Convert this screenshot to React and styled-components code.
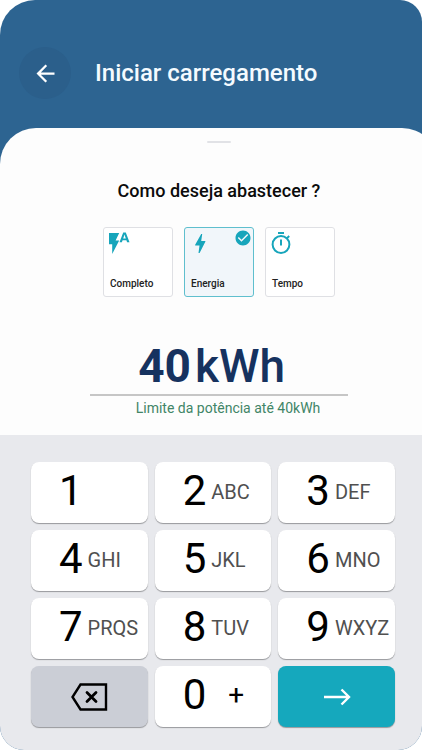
import React, { useState } from "react";
import styled, { createGlobalStyle } from "styled-components";
import { MdArrowBack, MdCheckCircle } from "react-icons/md";

const GlobalStyle = createGlobalStyle`
  * {
    box-sizing: border-box;
  }
  body {
    margin: 0;
    background: #fff;
    font-family: Roboto, "Liberation Sans", sans-serif;
  }
  button, input {
    font-family: inherit;
  }
`;

const Screen = styled.div`
  min-height: 100vh;
  display: flex;
  flex-direction: column;
  overflow: hidden;
  background: #2d6491;
  border-radius: 35px 22px 24px 24px;
`;

const Header = styled.header`
  display: flex;
  align-items: center;
  gap: 24px;
  padding: 47px 19px 29px;
`;

const BackButton = styled.button`
  width: 52px;
  height: 52px;
  display: flex;
  align-items: center;
  justify-content: center;
  padding: 0;
  border: 0;
  border-radius: 50%;
  background: #2b5f8b;
  color: #fff;
  font-size: 27px;
  cursor: pointer;
`;

const Title = styled.h1`
  margin: 0;
  color: #f5fbff;
  font-size: 24px;
  line-height: 28px;
  font-weight: 500;
`;

/* the sheet runs a little past the right edge of the screen */
const Sheet = styled.main`
  flex: 1;
  display: flex;
  flex-direction: column;
  align-items: center;
  margin-right: -16px;
  padding: 13px 0 18px;
  border-radius: 36px 36px 0 0;
  background: #fdfdfd;
`;

const Handle = styled.div`
  width: 24px;
  height: 2px;
  border-radius: 1px;
  background: #e1e2e6;
`;

const Question = styled.h2`
  margin: 36px 0 24px;
  color: #0b0b0b;
  font-size: 18px;
  line-height: 24px;
  font-weight: 500;
`;

const Options = styled.div`
  display: flex;
  gap: 11px;
`;

const Option = styled.label`
  position: relative;
  width: 70px;
  height: 70px;
  display: flex;
  flex-direction: column;
  justify-content: space-between;
  padding: 3px 3px 5px;
  border: 1px solid ${({ $checked }) => ($checked ? "#5fbfce" : "#dfe0e4")};
  border-radius: 3px;
  background: ${({ $checked }) => ($checked ? "#f1f6fa" : "#fff")};
  color: #17a5bb;
  cursor: pointer;

  input {
    position: absolute;
    opacity: 0;
    margin: 0;
  }
  span {
    padding-left: 3px;
    color: #222;
    font-size: 10px;
    line-height: 14px;
    font-weight: 500;
  }
  .check {
    position: absolute;
    top: 1px;
    right: 1px;
    font-size: 18px;
  }
`;

const Amount = styled.label`
  width: 258px;
  display: flex;
  justify-content: center;
  gap: 4px;
  margin-top: 41px;
  padding: 0 16px 0 0;
  border-bottom: 2px solid #c6c6c6;
  color: #16325f;
  font-size: 46px;
  line-height: 56px;
  font-weight: 500;

  input {
    width: 54px;
    padding: 0;
    border: 0;
    outline: 0;
    background: transparent;
    color: inherit;
    font-size: 46px;
    line-height: 56px;
    font-weight: 700;
    text-align: right;
  }
`;

const Hint = styled.p`
  margin: 3px 0 0;
  padding-left: 18px;
  color: #418567;
  font-size: 14px;
  line-height: 18px;
`;

const Keypad = styled.div`
  display: grid;
  grid-template-columns: repeat(3, 1fr);
  grid-auto-rows: 61px;
  gap: 7px;
  padding: 27px 27px 23px 31px;
  background: #e8e9ed;
`;

const Key = styled.button`
  display: flex;
  align-items: center;
  gap: 5px;
  padding: 0 0 4px 28px;
  border: 0;
  border-radius: 8px;
  background: #fff;
  box-shadow: 0 1px 1px #97989c;
  color: #000;
  font-size: 42px;
  line-height: 48px;
  cursor: pointer;

  small {
    padding-top: 2px;
    color: #505050;
    font-size: 20px;
    line-height: 24px;
  }
`;

const PlusKey = styled(Key)`
  gap: 22px;

  small {
    padding-top: 0;
    color: #000;
    font-size: 28px;
  }
`;

const ActionKey = styled(Key)`
  justify-content: center;
  padding: 0;
  background: ${({ $primary }) => ($primary ? "#15a8bd" : "#cbced6")};
  color: ${({ $primary }) => ($primary ? "#fff" : "#000")};
`;

const FlashAutoIcon = () => (
  <svg width="26" height="24" viewBox="0 0 26 24" fill="currentColor">
    <path d="M2 2H12.2L8.6 9.4H12.2L5.2 23V13.2H2Z" />
    <path
      fillRule="evenodd"
      d="M16.2 1.5H18.8L22.5 11.2H20.1L19.4 9.2H15.6L14.9 11.2H12.5ZM16.2 7.4H18.8L17.5 3.6Z"
    />
  </svg>
);

const BoltIcon = () => (
  <svg width="24" height="24" viewBox="0 0 24 24" fill="currentColor">
    <path d="M13.2 3H14.2L13.2 10H16.8C17.5 10 17.5 10.6 17.2 11.1L11.6 22H10.5L11.5 14.6H7.7C7 14.6 7 14 7.3 13.5Z" />
  </svg>
);

const TimerIcon = () => (
  <svg width="24" height="24" viewBox="0 0 24 24" fill="none" stroke="currentColor" strokeWidth="2">
    <circle cx="12" cy="13.5" r="8.4" />
    <path d="M9 2H15M12 8.5V14.5M17.8 7.4L20.2 5" />
  </svg>
);

const BackspaceIcon = () => (
  <svg width="38" height="30" viewBox="0 0 38 30" fill="none" stroke="currentColor" strokeWidth="2.4">
    <path d="M10.5 2.5H36V27.5H10.5L2.5 15Z" />
    <path d="M17 10.5L26 19.5M26 10.5L17 19.5" strokeWidth="2.8" strokeLinecap="round" />
  </svg>
);

const ArrowIcon = () => (
  <svg width="30" height="20" viewBox="0 0 30 20" fill="none" stroke="currentColor" strokeWidth="2.4">
    <path d="M2 10H27M19.5 2.5L27 10L19.5 17.5" />
  </svg>
);

const options = [
  { id: "completo", text: "Completo", Icon: FlashAutoIcon },
  { id: "energia", text: "Energia", Icon: BoltIcon },
  { id: "tempo", text: "Tempo", Icon: TimerIcon },
];

const keys = [
  ["1", ""],
  ["2", "ABC"],
  ["3", "DEF"],
  ["4", "GHI"],
  ["5", "JKL"],
  ["6", "MNO"],
  ["7", "PRQS"],
  ["8", "TUV"],
  ["9", "WXYZ"],
];

const App = () => {
  const [selected, setSelected] = useState("energia");
  const [amount, setAmount] = useState("40");

  const onPress = (digit) => setAmount((value) => (value + digit).slice(-2));
  const onErase = () => setAmount((value) => value.slice(0, -1));

  return (
    <>
      <GlobalStyle />
      <Screen>
        <Header>
          <BackButton type="button" aria-label="Voltar">
            <MdArrowBack />
          </BackButton>
          <Title>Iniciar carregamento</Title>
        </Header>
        <Sheet>
          <Handle />
          <Question>Como deseja abastecer ?</Question>
          <Options role="radiogroup" aria-label="Como deseja abastecer ?">
            {options.map(({ id, text, Icon }) => (
              <Option key={id} $checked={selected === id}>
                <input type="radio" name="mode" checked={selected === id} onChange={() => setSelected(id)} />
                <Icon />
                {selected === id && <MdCheckCircle className="check" />}
                <span>{text}</span>
              </Option>
            ))}
          </Options>
          <Amount>
            <input
              inputMode="numeric"
              maxLength={2}
              value={amount}
              onChange={(e) => setAmount(e.target.value)}
            />
            kWh
          </Amount>
          <Hint>Limite da potência até 40kWh</Hint>
        </Sheet>
        <Keypad>
          {keys.map(([digit, letters]) => (
            <Key key={digit} type="button" onClick={() => onPress(digit)}>
              {digit}
              {letters && <small>{letters}</small>}
            </Key>
          ))}
          <ActionKey type="button" aria-label="Apagar" onClick={onErase}>
            <BackspaceIcon />
          </ActionKey>
          <PlusKey type="button" onClick={() => onPress("0")}>
            0<small>+</small>
          </PlusKey>
          <ActionKey type="button" aria-label="Continuar" $primary>
            <ArrowIcon />
          </ActionKey>
        </Keypad>
      </Screen>
    </>
  );
};

export default App;
